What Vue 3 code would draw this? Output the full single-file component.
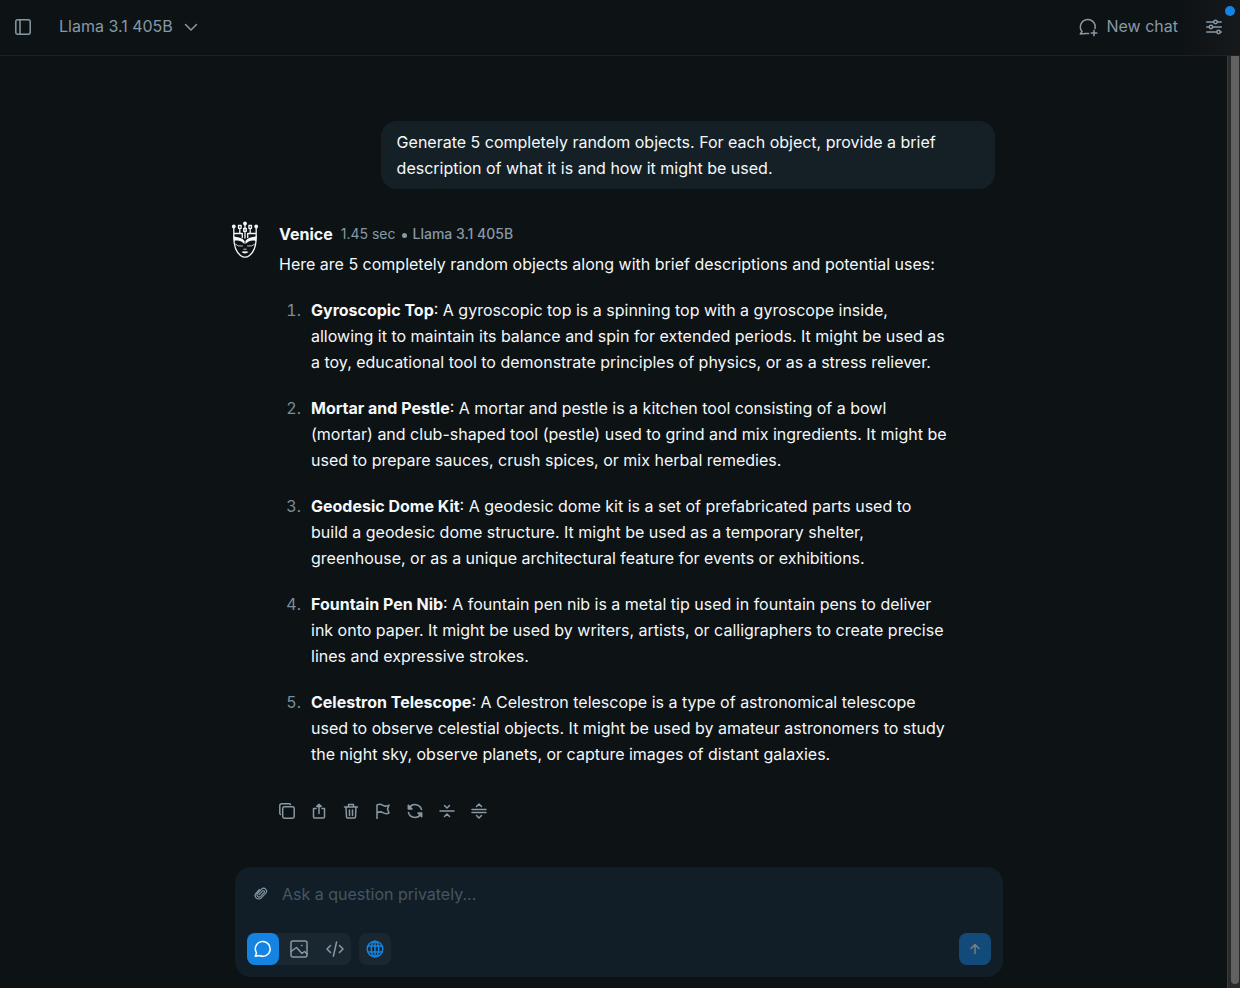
<template>
  <div class="app">
    <header class="topbar">
      <button class="plain" type="button" aria-label="Toggle sidebar">
        <svg class="icon" viewBox="0 0 16 16">
          <rect x="0.8" y="0.8" width="14.4" height="14.4" rx="2" />
          <path d="M5 1v14" />
        </svg>
      </button>
      <button class="plain model" type="button">
        <span>{{ model }}</span>
        <svg class="chevron" viewBox="0 0 14 14"><path d="M1.500 4.500 7 10l5.500-5.500" /></svg>
      </button>
      <div class="spacer"></div>
      <button class="plain new-chat" type="button">
        <svg class="icon-lg" viewBox="0 0 20 20">
          <path d="M10.500 16.600 8 16.400 2.300 17 4 14.500A7.400 7.400 0 1 1 17 11.500" />
          <path d="M16 13.200v5.600M13.200 16h5.600" />
        </svg>
        <span>New chat</span>
      </button>
      <button class="plain settings" type="button" aria-label="Settings">
        <svg class="icon" viewBox="0 0 16 16">
          <path d="M.7 3H7.500M11.500 3h3.800M.7 8H3M7 8h8.300M.7 13h9.800M14.500 13h.8" />
          <circle cx="9.500" cy="3" r="1.700" />
          <circle cx="5" cy="8" r="1.700" />
          <circle cx="12.500" cy="13" r="1.700" />
        </svg>
        <span class="dot"></span>
      </button>
    </header>

    <div class="body">
      <main class="content">
        <section class="messages">
          <p class="bubble">{{ question }}</p>

          <article class="answer">
            <svg class="avatar" viewBox="0 0 28 38">
              <path d="M2.800 6v9.500M25.200 6v9.500M8.800 8v4M19.200 8v4M14 3v5M2.800 12.500h8.500v4M25.200 12.500h-8.500v4M14 10v7" />
              <circle class="solid" cx="2.800" cy="5.500" r="1.900" />
              <circle class="solid" cx="25.200" cy="5.500" r="1.900" />
              <rect x="7.500" y="4.500" width="2.600" height="2.800" />
              <rect x="17.900" y="4.500" width="2.600" height="2.800" />
              <circle class="solid" cx="14" cy="2.500" r="1.900" />
              <rect x="12.700" y="7.500" width="2.600" height="2.800" />
              <path d="M2.800 16C2.800 25 5 31 9.500 34.500q4.500 3.400 9 0C23 31 25.200 25 25.200 16" />
              <path class="solid" d="M2.300 15.500c5 .3 9 1.500 11.300 4.500v3C10 19.700 7 19 3 20zM25.700 15.500c-5 .3-9 1.500-11.300 4.500v3c3.600-3.300 6.600-4 10.600-3z" />
              <path class="lid" d="M4.500 23.300q2 2.500 7 1.700M23.500 23.300q-2 2.500-7 1.700" />
              <path class="lid" d="M12.800 28.200h2.400" />
              <path class="solid" d="M10.500 31q2-1.300 3.500-.6 1.500-.7 3.500.6-3.500 2.800-7 0z" />
            </svg>
            <div class="text">
              <div class="byline">
                <strong>Venice</strong>
                <span>1.45 sec</span>
                <span class="bullet"></span>
                <span class="used-model">{{ model }}</span>
              </div>
              <p>Here are 5 completely random objects along with brief descriptions and potential uses:</p>
              <ol>
                <li v-for="item in items" :key="item.name">
                  <div><strong>{{ item.name }}</strong>: {{ item.text }}</div>
                </li>
              </ol>
              <div class="actions">
                <button v-for="a in actions" :key="a.label" class="plain" type="button" :aria-label="a.label">
                  <svg class="icon" viewBox="0 0 16 16">
                    <path v-for="d in a.paths" :key="d" :d="d" />
                  </svg>
                </button>
              </div>
            </div>
          </article>
        </section>

        <div class="dock">
          <form class="composer" @submit.prevent="send">
            <div class="ask">
              <button class="plain" type="button" aria-label="Attach file">
                <svg class="clip" viewBox="0 0 14 14">
                  <path d="m5 7.700 3.600-3.900a1.100 1.100 0 0 1 1.600 1.500L6.500 9.300A2 2 0 0 1 3.500 6.500l4-4.300a2.900 2.900 0 0 1 4.200 4L7.300 10.900A3.500 3.500 0 0 1 2.100 6.100L5.500 2.400" />
                </svg>
              </button>
              <textarea v-model="draft" rows="1" placeholder="Ask a question privately..." aria-label="Message"></textarea>
            </div>
            <div class="tools">
              <div class="modes">
                <button type="button" :class="{ active: mode === 'chat' }" aria-label="Chat" @click="mode = 'chat'">
                  <svg class="icon-mode" viewBox="0 0 18 18">
                    <path d="M1.300 16.300 2.500 12.800A7.400 7.400 0 1 1 5.500 15.500Z" />
                  </svg>
                </button>
                <button type="button" :class="{ active: mode === 'image' }" aria-label="Image" @click="mode = 'image'">
                  <svg class="icon-mode" viewBox="0 0 18 18">
                    <rect x="1" y="1" width="16" height="16" rx="2" />
                    <path d="m1 11.500 5.500-4 5.500 6 2.500-2 2.500 2.500M11.500 5.500h.5" />
                  </svg>
                </button>
                <button type="button" :class="{ active: mode === 'code' }" aria-label="Code" @click="mode = 'code'">
                  <svg class="icon-mode" viewBox="0 0 18 18">
                    <path d="M4.500 5.500 1 9l3.500 3.500M13.500 5.500 17 9l-3.500 3.500M10.600 2 7.400 16" />
                  </svg>
                </button>
              </div>
              <button class="web" type="button" aria-label="Web search">
                <svg class="icon-mode" viewBox="0 0 18 18">
                  <circle cx="9" cy="9" r="7.800" />
                  <ellipse cx="9" cy="9" rx="3.700" ry="7.800" />
                  <path d="M9 1.200v15.600M2 6h14M2 12h14" />
                </svg>
              </button>
              <div class="spacer"></div>
              <button class="send" type="submit" aria-label="Send" :disabled="!draft">
                <svg class="arrow" viewBox="0 0 12 12"><path d="M6 10.500V2M2 5.500l4-4 4 4" /></svg>
              </button>
            </div>
          </form>
        </div>
      </main>
      <div class="scrollbar" aria-hidden="true"><div class="thumb"></div></div>
    </div>
  </div>
</template>

<script setup>
import { ref } from "vue";

const model = "Llama 3.1 405B";
const mode = ref("chat");
const draft = ref("");

const question =
  "Generate 5 completely random objects. For each object, provide a brief description of what it is and how it might be used.";

const items = [
  {
    name: "Gyroscopic Top",
    text: "A gyroscopic top is a spinning top with a gyroscope inside, allowing it to maintain its balance and spin for extended periods. It might be used as a toy, educational tool to demonstrate principles of physics, or as a stress reliever.",
  },
  {
    name: "Mortar and Pestle",
    text: "A mortar and pestle is a kitchen tool consisting of a bowl (mortar) and club-shaped tool (pestle) used to grind and mix ingredients. It might be used to prepare sauces, crush spices, or mix herbal remedies.",
  },
  {
    name: "Geodesic Dome Kit",
    text: "A geodesic dome kit is a set of prefabricated parts used to build a geodesic dome structure. It might be used as a temporary shelter, greenhouse, or as a unique architectural feature for events or exhibitions.",
  },
  {
    name: "Fountain Pen Nib",
    text: "A fountain pen nib is a metal tip used in fountain pens to deliver ink onto paper. It might be used by writers, artists, or calligraphers to create precise lines and expressive strokes.",
  },
  {
    name: "Celestron Telescope",
    text: "A Celestron telescope is a type of astronomical telescope used to observe celestial objects. It might be used by amateur astronomers to study the night sky, observe planets, or capture images of distant galaxies.",
  },
];

const actions = [
  {
    label: "Copy",
    paths: [
      "M5.400 3.700h8.100a1.700 1.700 0 0 1 1.700 1.700v8.100a1.700 1.700 0 0 1-1.700 1.700H5.400a1.700 1.700 0 0 1-1.700-1.700V5.400A1.700 1.700 0 0 1 5.400 3.700z",
      "M1.500 11.500A1.700 1.700 0 0 1 .8 10V2.500A1.700 1.700 0 0 1 2.500.8H10a1.700 1.700 0 0 1 1.500.7",
    ],
  },
  {
    label: "Share",
    paths: [
      "M5 5.500H2.500v8.200a1.300 1.300 0 0 0 1.300 1.300h8.400a1.300 1.300 0 0 0 1.300-1.300V5.500H11",
      "M8 10.500V1.200M5.700 3.500 8 1.200l2.300 2.300z",
    ],
  },
  {
    label: "Delete",
    paths: ["M1.500 4h13M5.500 4V1.500h5V4", "M3 4l.5 10a1 1 0 0 0 1 1h7a1 1 0 0 0 1-1L13 4", "M6.500 7v5.500M9.500 7v5.500"],
  },
  {
    label: "Report",
    paths: ["M2 15.500V2q3-1.500 6 .3t6-.3l-1.500 4L14 10q-3 1.500-6-.3T2 10"],
  },
  {
    label: "Regenerate",
    paths: [
      "M14.500 6.500A6.700 6.700 0 0 0 2.500 4.500L1.500 6M1.300 2.300V6H5z",
      "M1.500 9.500a6.700 6.700 0 0 0 12 2l1-1.500M14.700 13.700V10H11z",
    ],
  },
  {
    label: "Shorten",
    paths: ["M1 8h14", "m5.500 2.500 2.500 2.500 2.500-2.500", "M5.500 13.500 8 11l2.500 2.500"],
  },
  {
    label: "Lengthen",
    paths: ["M1 6.500h14M1 9.500h14", "M5.500 3.500 8 1l2.500 2.500", "M5.500 12.500 8 15l2.500-2.500"],
  },
];

function send() {
  draft.value = "";
}
</script>

<style>
body {
  margin: 0;
  background: #0d1214;
}
</style>

<style scoped>
.app {
  display: flex;
  flex-direction: column;
  min-height: 100vh;
  color: #f4f8fb;
  font-family: Inter, "Liberation Sans", sans-serif;
  font-size: 16px;
  line-height: 26px;
}

* {
  box-sizing: border-box;
}

button {
  display: flex;
  align-items: center;
  justify-content: center;
  padding: 0;
  border: none;
  color: #8799a5;
  font: inherit;
  cursor: pointer;
}

.plain {
  background: none;
}

svg {
  display: block;
  flex: none;
  fill: none;
  stroke: currentColor;
  stroke-width: 1.5;
  stroke-linecap: round;
  stroke-linejoin: round;
}

.icon {
  width: 16px;
  height: 16px;
}

.icon-lg {
  width: 20px;
  height: 20px;
}

.icon-mode {
  width: 18px;
  height: 18px;
}

.chevron,
.clip {
  width: 14px;
  height: 14px;
}

.clip {
  stroke-width: 1.1;
}

.arrow {
  width: 12px;
  height: 12px;
}

.spacer {
  flex: 1;
}

.topbar {
  display: flex;
  align-items: center;
  height: 56px;
  padding: 0 18px 2px 15px;
  border-bottom: 1px solid #1b2225;
  background: linear-gradient(to right, transparent calc(100% - 60px), #16191c);
}

.topbar span {
  padding-bottom: 2px;
}

.model {
  gap: 11px;
  margin-left: 28px;
}

.new-chat {
  gap: 8px;
  margin-right: 28px;
}

.settings {
  position: relative;
}

.dot {
  position: absolute;
  top: -13px;
  right: -13px;
  width: 10px;
  height: 10px;
  border-radius: 50%;
  background: #1583e1;
}

.body {
  display: flex;
  flex: 1;
}

.content {
  display: flex;
  flex: 1;
  flex-direction: column;
  min-width: 0;
  padding-bottom: 11px;
}

.messages {
  display: flex;
  flex: 1;
  flex-direction: column;
  width: 100%;
  max-width: 773px;
  margin: 0 auto;
  padding: 65px 5px 0 0;
}

.bubble {
  align-self: flex-end;
  width: 80%;
  margin: 0;
  padding: 8px 16px;
  border-radius: 16px;
  background: #152026;
}

.answer {
  display: flex;
  gap: 20px;
  padding: 32px 46px 48px 4px;
}

.avatar {
  width: 28px;
  height: 38px;
  color: #f4f8fb;
  stroke-width: 1.3;
}

.solid {
  fill: currentColor;
  stroke: none;
}

.lid {
  stroke-width: 0.8;
}

.text {
  flex: 1;
  min-width: 0;
}

.text p {
  margin: 4px 0 20px;
}

.byline {
  display: flex;
  align-items: center;
  gap: 8px;
  color: #8799a5;
  font-size: 14px;
}

.byline strong {
  color: #f4f8fb;
  font-size: 16px;
}

.bullet {
  width: 5px;
  height: 5px;
  margin: 2px -2px 0;
  border-radius: 50%;
  background: #8799a5;
}

.used-model {
  font-weight: 500;
}

ol {
  display: flex;
  flex-direction: column;
  gap: 20px;
  margin: 0;
  padding: 0;
  list-style: none;
  counter-reset: item;
}

li {
  display: grid;
  grid-template-columns: 22px 1fr;
  gap: 10px;
  counter-increment: item;
}

li::before {
  content: counter(item) ".";
  color: #7b8d99;
  font-variant-numeric: tabular-nums;
  text-align: right;
}

strong {
  font-weight: 700;
}

.actions {
  display: flex;
  gap: 16px;
  margin-top: 36px;
}

.dock {
  width: 100%;
  max-width: 779px;
  margin: 0 auto;
  padding-left: 11px;
}

.composer {
  display: flex;
  flex-direction: column;
  justify-content: space-between;
  min-height: 110px;
  padding: 14px 12px 12px;
  border-radius: 16px;
  background: #121e27;
}

.ask {
  display: flex;
  align-items: center;
  gap: 14px;
  margin-left: 7px;
}

textarea {
  flex: 1;
  height: 26px;
  padding: 0;
  border: none;
  outline: none;
  resize: none;
  background: none;
  color: #f4f8fb;
  font: inherit;
}

textarea::placeholder {
  color: #475560;
}

.tools {
  display: flex;
  gap: 8px;
}

.tools button {
  width: 32px;
  height: 32px;
  border-radius: 8px;
}

.modes {
  display: flex;
  gap: 4px;
  border-radius: 8px;
  background: #1a2731;
}

.modes button {
  background: none;
}

.modes .active {
  background: #1583e1;
  color: #fff;
}

.tools .web {
  background: #1a2731;
  color: #1583e1;
}

.tools .send {
  background: #124b79;
  color: #73808a;
}

.scrollbar {
  display: flex;
  width: 13px;
  padding: 0 1px 4px 3px;
  border-left: 1px solid #3c3c3c;
  background: #2a2a2a;
}

.thumb {
  flex: 1;
  border-radius: 0 0 4px 4px;
  background: #626262;
}
</style>
